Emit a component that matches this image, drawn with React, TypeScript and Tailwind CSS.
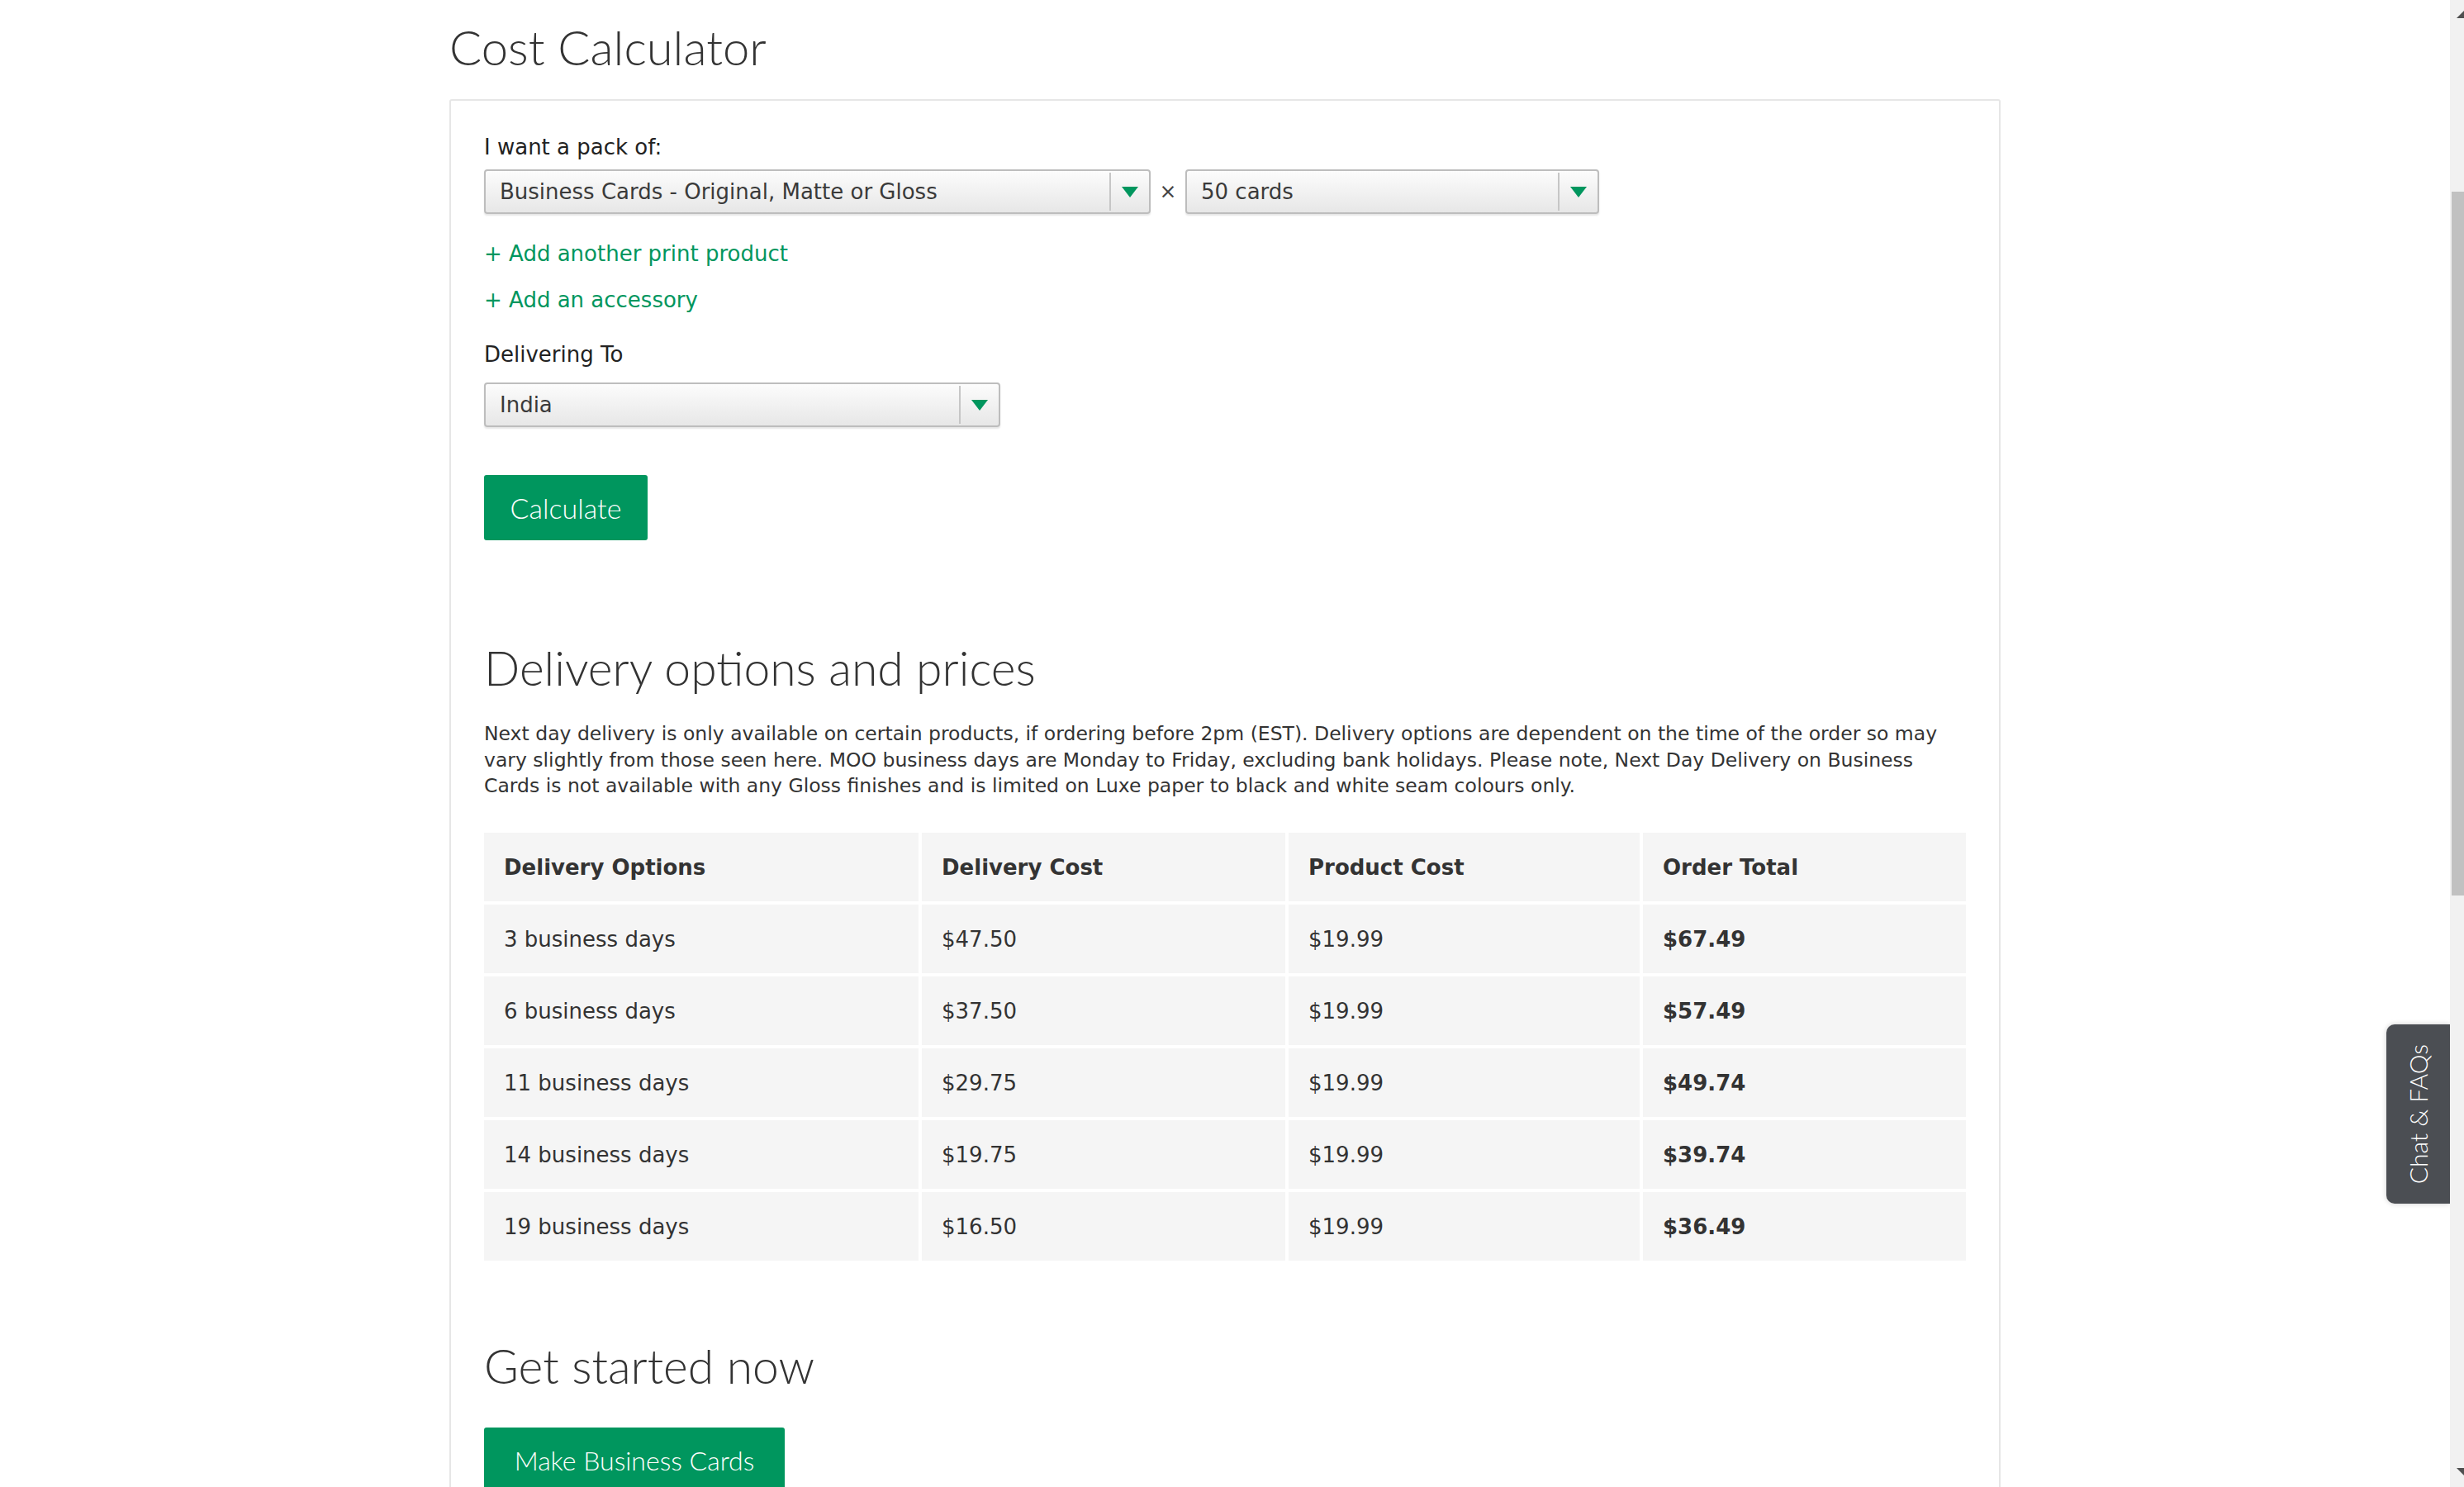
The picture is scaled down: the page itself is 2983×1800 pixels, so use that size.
import React from "react"

const rows = [
    ["3 business days", "$47.50", "$19.99", "$67.49"],
    ["6 business days", "$37.50", "$19.99", "$57.49"],
    ["11 business days", "$29.75", "$19.99", "$49.74"],
    ["14 business days", "$19.75", "$19.99", "$39.74"],
    ["19 business days", "$16.50", "$19.99", "$36.49"],
]

const headers = ["Delivery Options", "Delivery Cost", "Product Cost", "Order Total"]

function Arrow() {
    return (
        <svg width="20" height="13" viewBox="0 0 20 13">
            <path d="M0 0h20L10 13z" fill="#00965e" />
        </svg>
    )
}

function Select({ value, className }: { value: string; className: string }) {
    return (
        <div className={`flex h-[54px] rounded-[4px] border-2 border-[#bdbdbd] bg-linear-to-b from-[#fcfcfc] to-[#e7e7e7] shadow-[0_2px_2px_rgba(0,0,0,0.1)] ${className}`}>
            <span className="flex flex-1 items-center pl-[17px] text-[26px] text-[#3a3a3a]">{value}</span>
            <span className="my-[2px] flex w-[48px] items-center justify-center border-l-2 border-[#c6c6c6]">
                <Arrow />
            </span>
        </div>
    )
}

export default function App() {
    return (
        <div className="flex h-[1800px] w-full overflow-hidden bg-white font-['DejaVu_Sans',sans-serif] text-[#333]">
            <div className="relative h-full flex-1 overflow-hidden">
                <div className="mx-auto w-[1878px]">
                    <h1 className="pt-[28px] font-['Lato',sans-serif] text-[58px] font-light leading-none text-[#333]">Cost Calculator</h1>

                    <div className="mt-[34px] h-[1800px] rounded-[3px] border-2 border-[#e6e6e6] px-[40px]">
                        <p className="pt-[38px] text-[26px] leading-[36px] text-[#222]">I want a pack of:</p>
                        <div className="mt-[9px] flex items-center">
                            <Select value="Business Cards - Original, Matte or Gloss" className="w-[807px]" />
                            <span className="w-[42px] text-center text-[25px] text-[#444]">×</span>
                            <Select value="50 cards" className="w-[501px]" />
                        </div>

                        <a className="mt-[30px] block text-[26px] leading-[36px] text-[#00965e]" href="#">+ Add another print product</a>
                        <a className="mt-[20px] block text-[26px] leading-[36px] text-[#00965e]" href="#">+ Add an accessory</a>

                        <p className="mt-[30px] text-[26px] leading-[36px] text-[#222]">Delivering To</p>
                        <Select value="India" className="mt-[16px] w-[625px]" />

                        <button className="mt-[58px] h-[79px] w-[198px] rounded-[3px] bg-[#00965e] font-['Lato',sans-serif] text-[34px] font-light text-white">
                            Calculate
                        </button>

                        <h2 className="mt-[126px] font-['Lato',sans-serif] text-[57px] font-light leading-none text-[#333]">Delivery options and prices</h2>
                        <p className="mt-[36px] text-[23.5px] leading-[31.7px] text-[#333]">
                            Next day delivery is only available on certain products, if ordering before 2pm (EST). Delivery options are dependent on the time of the order so may<br />
                            vary slightly from those seen here. MOO business days are Monday to Friday, excluding bank holidays. Please note, Next Day Delivery on Business<br />
                            Cards is not available with any Gloss finishes and is limited on Luxe paper to black and white seam colours only.
                        </p>

                        <div className="mt-[40px] grid grid-cols-[526px_440px_425px_1fr] gap-[4px] text-[26px]">
                            {headers.map((h) => (
                                <div key={h} className="flex h-[83px] items-center bg-[#f5f5f5] pl-[24px] pt-[2px] font-bold text-[#333]">{h}</div>
                            ))}
                            {rows.map((r) =>
                                r.map((c, i) => (
                                    <div key={r[0] + i} className={`flex h-[83px] items-center bg-[#f5f5f5] pl-[24px] pt-[2px] text-[#333] ${i === 3 ? "font-bold" : ""}`}>{c}</div>
                                ))
                            )}
                        </div>

                        <h2 className="mt-[99px] font-['Lato',sans-serif] text-[57px] font-light leading-none text-[#333]">Get started now</h2>
                        <button className="mt-[46px] h-[79px] w-[364px] rounded-[3px] bg-[#00965e] font-['Lato',sans-serif] text-[32px] font-light text-white">
                            Make Business Cards
                        </button>
                    </div>
                </div>

                {/* chat tab */}
                <div className="absolute right-0 top-[1240px] flex h-[217px] w-[77px] items-center justify-center rounded-l-[10px] bg-[#4b4e53] shadow-[0_0_6px_rgba(0,0,0,0.2)]">
                    <span className="rotate-180 font-['Lato',sans-serif] text-[30px] font-light text-white [writing-mode:vertical-rl]">Chat &amp; FAQs</span>
                </div>
            </div>

            {/* scrollbar */}
            <div className="flex h-full w-[17px] flex-col bg-[#f1f1f1]">
                <div className="flex h-[232px] justify-end pt-[13px]">
                    <svg width="9" height="9" viewBox="0 0 9 9"><path d="M9 0v9H0z" fill="#505050" /></svg>
                </div>
                <div className="ml-[2px] h-[852px] bg-[#c1c1c1]" />
                <div className="flex flex-1 items-end justify-end pb-[14px]">
                    <svg width="9" height="9" viewBox="0 0 9 9"><path d="M0 0h9v9z" fill="#505050" /></svg>
                </div>
            </div>
        </div>
    )
}
